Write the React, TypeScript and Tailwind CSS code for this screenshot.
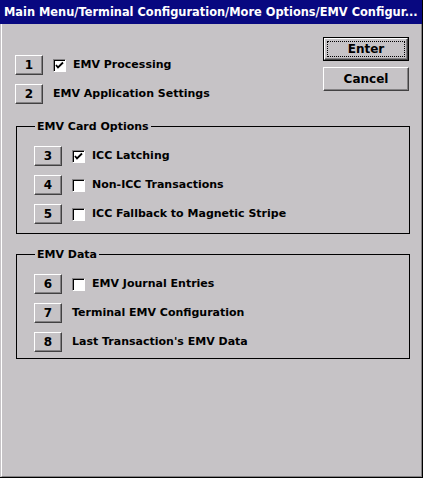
import React from 'react';

const font = { fontFamily: '"DejaVu Sans", Verdana, sans-serif' };

const NumButton: React.FC<{ n: number }> = ({ n }) => (
  <div className="flex h-[20px] w-[28px] shrink-0 items-center justify-center border border-t-white border-l-white border-r-[#424142] border-b-[#424142] bg-[#c6c3c6] text-[12px] font-bold leading-none shadow-[inset_-1px_-1px_#848284]">
    {n}
  </div>
);

const CheckBox: React.FC<{ checked?: boolean }> = ({ checked }) => (
  <div className="flex h-[13px] w-[13px] shrink-0 items-center justify-center border border-t-[#848284] border-l-[#848284] border-r-white border-b-white bg-white shadow-[inset_1px_1px_#000]">
    {checked && (
      <svg width="11" height="11" viewBox="0 0 11 11">
        <path d="M2 5 L4 7.5 L9 2.5" fill="none" stroke="#000" strokeWidth="1.8" />
      </svg>
    )}
  </div>
);

type Row = { n: number; label: string; check?: boolean; checked?: boolean };

const OptionRow: React.FC<Row> = ({ n, label, check, checked }) => (
  <div className="flex h-[20px] items-center">
    <NumButton n={n} />
    {check ? (
      <>
        <div className="ml-[10px]">
          <CheckBox checked={checked} />
        </div>
        <span className="ml-[7px] text-[11px] font-bold">{label}</span>
      </>
    ) : (
      <span className="ml-[10px] text-[11px] font-bold">{label}</span>
    )}
  </div>
);

const Group: React.FC<{ title: string; rows: Row[]; className: string }> = ({ title, rows, className }) => (
  <fieldset className={`ml-[14px] w-[394px] border border-black pl-[17px] ${className}`}>
    <legend className="ml-px px-[2px] text-[11px] font-bold leading-[13px]">{title}</legend>
    <div className="flex flex-col gap-[9px]">
      {rows.map((r) => (
        <OptionRow key={r.n} {...r} />
      ))}
    </div>
  </fieldset>
);

export default function App() {
  return (
    <div style={font} className="flex h-[478px] w-[423px] flex-col border-r border-b border-black bg-[#c6c3c6] text-black">
      <div className="h-[24px] shrink-0 overflow-hidden whitespace-nowrap bg-[#080880] pl-[4px] text-[11.4px] font-bold leading-[24px] text-white">
        Main Menu/Terminal Configuration/More Options/EMV Configur...
      </div>
      <div className="ml-px flex flex-1 flex-col border-l border-r border-b border-l-white border-r-[#848284] border-b-[#848284]">
        <div className="flex">
          <div className="ml-[13px] mt-[31px] flex flex-col gap-[9px]">
            <OptionRow n={1} label="EMV Processing" check checked />
            <OptionRow n={2} label="EMV Application Settings" />
          </div>
          <div className="ml-auto mr-[12px] mt-[13px] flex flex-col gap-[6px]">
            <button className="h-[24px] w-[86px] border border-black bg-[#c6c3c6] p-0 text-[12px] font-bold">
              <div className="flex h-full w-full items-center justify-center border border-t-white border-l-white border-r-[#424142] border-b-[#424142] p-[2px] shadow-[inset_-1px_-1px_#848284]">
                <div className="flex h-full w-full items-center justify-center border border-dotted border-black">Enter</div>
              </div>
            </button>
            <button className="flex h-[24px] w-[86px] items-center justify-center border border-t-white border-l-white border-r-[#424142] border-b-[#424142] bg-[#c6c3c6] p-0 text-[12px] font-bold shadow-[inset_-1px_-1px_#848284]">
              Cancel
            </button>
          </div>
        </div>
        <Group
          title="EMV Card Options"
          className="mt-[16px] h-[114px] pt-[13px]"
          rows={[
            { n: 3, label: 'ICC Latching', check: true, checked: true },
            { n: 4, label: 'Non-ICC Transactions', check: true },
            { n: 5, label: 'ICC Fallback to Magnetic Stripe', check: true },
          ]}
        />
        <Group
          title="EMV Data"
          className="mt-[14px] h-[111px] pt-[13px]"
          rows={[
            { n: 6, label: 'EMV Journal Entries', check: true },
            { n: 7, label: 'Terminal EMV Configuration' },
            { n: 8, label: "Last Transaction's EMV Data" },
          ]}
        />
      </div>
    </div>
  );
}
